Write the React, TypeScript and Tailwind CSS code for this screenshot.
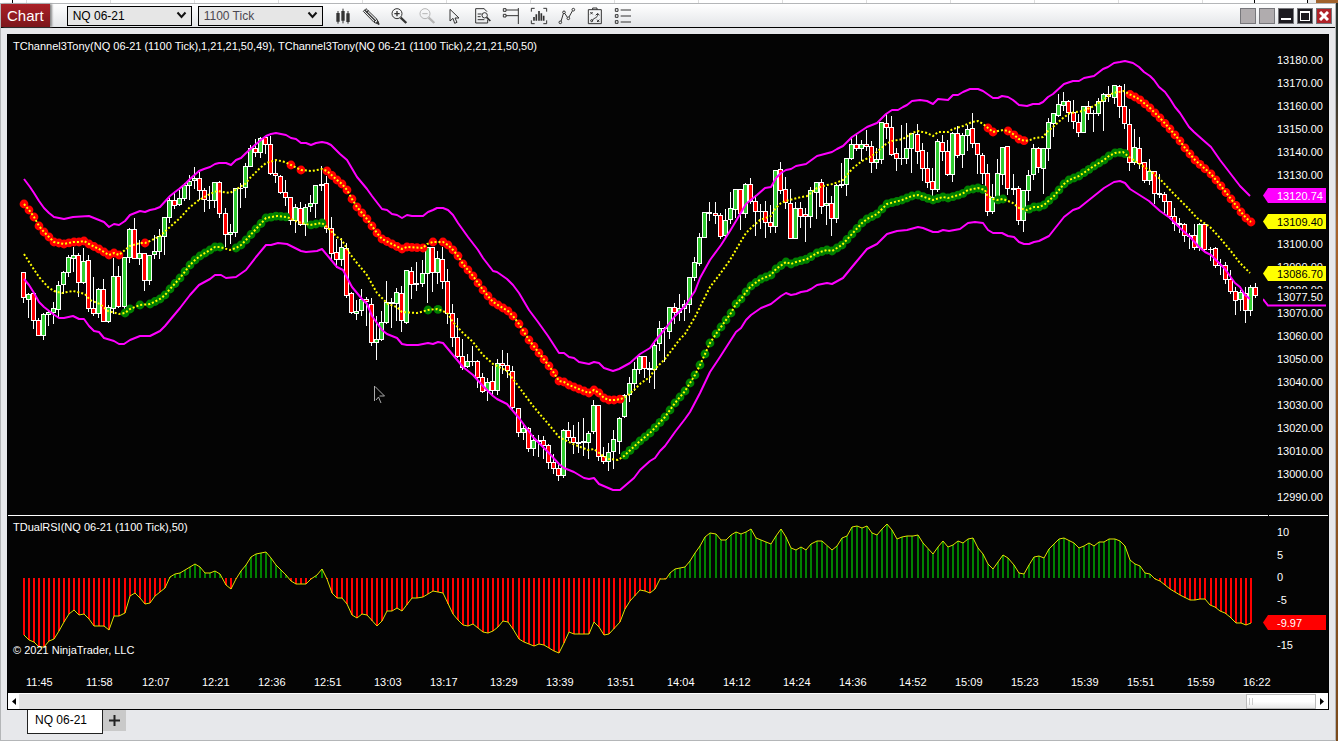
import React from "react";

/* ---------- chart data (plot units) ---------- */

// colour, high, body top, body bottom, low
const CANDLES = `r272,272,297,302 g293,294,299,317 r293,293,320,328 r318,320,335,335 g313,314,335,339 g310,312,314,325 g302,308,312,323 g281,285,309,316 g271,272,284,293 g255,257,272,276
g247,255,258,271 r253,255,282,296 g248,261,282,283 r255,260,308,311 r277,308,313,315 g288,289,313,317 r279,289,321,321 g305,307,321,322 g258,276,308,313 r266,276,306,307
g257,257,306,309 g228,229,257,262 r218,229,258,258 g240,253,258,264 r253,253,280,290 g255,255,280,284 g235,251,254,258 g229,236,251,258 g217,217,236,254 g198,200,217,222
r193,200,205,208 g190,198,204,205 g183,185,198,200 g175,181,185,199 g167,178,180,188 r172,178,190,199 r188,190,199,211 w186,200,200,208 g182,182,200,207 r181,182,213,217
r208,213,234,246 g224,232,234,243 g188,188,232,236 w183,188,188,207 g163,166,187,197 g145,148,166,166 r139,148,152,156 g137,138,152,157 r136,137,144,153 r136,144,173,174
r160,173,175,182 r175,176,192,193 r180,192,197,205 r197,197,220,224 g204,207,220,232 r202,208,224,225 g204,207,224,235 g195,203,206,211 g185,185,203,217 w166,184,185,190
r176,183,228,232 r217,228,253,260 r239,252,259,267 g238,247,259,265 r243,248,295,297 r292,293,312,313 g300,311,313,319 g289,299,310,315 r297,299,301,325 r298,304,342,345
g316,339,342,359 g311,322,339,340 g281,302,322,323 w298,302,303,327 g288,292,303,320 r286,293,320,331 g270,270,322,323 r267,271,284,298 w262,283,284,290 g260,273,283,286
g247,247,273,302 r247,247,272,291 g251,258,272,283 r247,259,281,288 r269,281,313,323 r304,313,337,346 r318,337,356,357 r339,356,367,369 g354,361,366,367 w346,361,361,365
r360,361,377,387 r373,377,391,392 g378,382,390,400 r366,381,390,394 g359,363,390,394 r350,363,365,373 r353,365,370,377 r366,371,407,408 r408,408,432,436 g425,428,432,439
r427,428,448,451 g435,440,448,455 w435,440,441,456 r436,440,445,458 r444,445,462,468 r454,462,468,473 r463,468,475,480 g429,430,475,477 r422,430,437,440 r425,437,442,453
g422,442,443,452 w418,441,442,455 g431,433,442,458 g400,405,431,433 r405,405,456,460 r447,456,461,463 g443,452,461,470 g430,439,451,468 g417,418,441,453 g394,395,416,417
g377,383,394,401 g362,369,383,390 g356,356,369,373 r356,356,368,377 w362,368,369,382 g343,345,369,388 g321,328,343,350 w327,328,328,361 g307,307,331,338 r303,307,312,323
g294,308,312,320 g300,304,308,320 g277,277,304,312 g257,262,277,280 g233,237,263,265 g212,212,237,237 w202,212,213,220 r202,213,215,223 r213,215,236,238 g209,220,235,238
g192,208,219,223 g189,189,209,217 r189,189,213,229 g183,184,213,217 r178,184,201,203 r195,201,211,235 w204,211,211,228 r201,211,222,237 r205,222,226,232 g170,170,226,232
r162,169,190,193 r177,189,202,208 r189,203,238,238 g202,208,238,238 r202,208,216,227 r208,214,216,241 g187,190,216,227 g182,182,192,218 r179,182,206,213 g187,203,205,224
r196,203,218,235 g184,185,218,222 w163,184,185,187 g158,158,184,195 g138,144,158,159 r135,144,148,150 g140,144,148,160 r130,144,146,150 r141,146,162,172 g148,159,162,168
g122,122,159,163 r114,123,127,138 r116,127,154,155 r148,153,158,170 w125,158,158,164 g123,148,158,163 g133,133,148,172 r124,134,151,163 r143,150,168,180 r152,168,182,187
r168,181,189,195 g139,141,189,191 r135,142,151,160 r140,151,174,175 g132,133,174,181 r126,133,155,157 g133,135,154,167 g125,129,135,150 r113,128,143,147 r143,143,154,173
r153,155,173,183 r164,173,211,215 g184,197,211,213 g159,173,197,203 g147,147,174,184 r146,146,188,194 w174,188,189,194 r186,188,220,224 g190,190,220,231 g170,175,190,200
g144,148,174,179 r147,148,167,172 g148,148,168,193 g118,122,148,160 g113,113,123,136 g94,104,115,116 g92,101,105,110 r100,101,112,121 r100,112,121,128 r114,122,132,136
g106,106,132,132 r101,106,113,119 w110,113,113,131 g98,101,113,115 g93,94,101,130 r86,94,96,101 g85,85,97,103 r85,86,106,117 r84,106,123,128 r109,124,162,170
g129,147,162,164 r137,148,163,168 r162,162,180,182 g159,171,180,184 r171,171,193,203 w174,193,194,197 r192,194,201,212 r201,201,216,218 r208,216,223,230 w218,223,224,232
r223,224,235,241 w233,235,236,248 r224,235,247,249 g223,224,247,250 r223,224,249,251 w247,249,249,260 r247,248,265,267 w259,265,265,274 r262,265,279,283 r270,279,291,293
r287,291,300,314 g290,292,299,310 r287,293,310,322 g285,287,310,315 r283,287,295,297`
  .trim()
  .split(/\s+/)
  .map((s) => {
    const [high, top, bottom, low] = s.slice(1).split(",").map(Number);
    return { kind: s[0], high, top, bottom, low };
  });

type Pt = [number, number];
const parse = (s: string): Pt[] =>
  s.trim().split(/\s+/).map((p) => p.split(",").map(Number) as Pt);

const UPPER = parse(`24,179 30,187 34,193 39,201 44,208 49,213 54,217 64,219 73,217 89,216 94,218 104,222 109,227 114,224 119,225 125,221 130,215 140,211 145,212 150,210 155,209 160,207 170,196 175,192 179,189 185,184 190,179 199,171 204,169 210,167 215,164 219,163 226,163 231,165 236,160 241,158 246,153 255,145 261,140 266,136 271,134 276,133 286,135 291,138 296,139 301,143 306,143 311,145 316,143 322,142 327,143 331,145 340,154 347,160 357,177 367,189 372,196 382,209 387,210 392,214 397,215 402,218 407,215 412,216 423,216 428,212 433,210 437,208 443,208 448,210 453,215 458,223 468,237 478,250 483,258 493,271 497,272 507,279 513,285 519,293 529,310 538,322 548,336 559,353 564,353 569,357 574,358 579,362 589,364 594,362 599,363 604,368 613,371 619,369 630,363 640,354 650,348 655,341 665,329 675,316 685,306 695,291 700,278 710,260 721,245 730,231 736,221 746,204 752,199 757,195 765,188 771,187 776,178 781,173 786,170 791,169 796,166 806,164 817,156 832,152 837,149 843,146 852,137 867,127 877,123 886,114 892,110 898,110 903,107 907,105 912,101 920,100 927,101 933,104 938,99 948,100 953,95 958,95 963,92 970,89 978,89 983,91 993,98 998,98 1002,96 1008,97 1013,100 1019,105 1027,106 1033,104 1039,104 1043,102 1048,97 1053,94 1064,84 1073,81 1079,81 1084,78 1094,76 1103,69 1108,67 1114,63 1120,62 1125,61 1133,63 1139,67 1144,72 1150,76 1154,80 1159,87 1165,92 1170,99 1175,107 1180,113 1189,127 1194,132 1203,140 1211,147 1220,160 1230,173 1240,186 1250,196`);

const LOWER = parse(`24,279 29,285 34,293 39,302 44,307 53,314 59,318 64,318 73,316 79,319 84,319 89,326 94,331 99,332 104,338 114,341 119,344 124,344 130,340 140,336 150,336 160,331 165,326 170,320 180,308 190,295 199,285 210,279 215,275 221,275 226,278 236,277 246,270 256,257 266,245 271,245 278,243 287,244 301,251 306,252 317,251 322,249 332,261 337,267 343,270 352,287 362,299 367,304 372,316 377,323 382,330 387,334 397,338 402,344 407,345 418,345 428,343 433,344 438,342 443,343 448,349 463,367 473,375 482,385 493,396 497,399 507,404 513,411 519,418 533,437 548,452 559,464 564,468 574,472 584,478 589,479 594,478 599,484 613,490 620,490 634,478 640,470 650,461 655,458 660,451 665,446 675,432 685,419 690,412 700,393 710,372 720,357 736,332 741,328 746,320 751,315 761,308 771,304 781,296 786,293 791,295 796,294 801,292 807,291 811,289 817,285 827,283 832,284 843,278 852,267 857,261 867,249 877,244 887,234 897,231 907,230 918,227 923,228 933,232 938,232 943,230 949,231 960,229 968,223 975,222 983,223 988,230 993,233 1002,233 1008,236 1014,237 1019,242 1024,244 1029,244 1034,242 1039,241 1049,236 1064,217 1073,210 1079,208 1084,204 1089,200 1104,188 1114,182 1120,181 1125,183 1130,189 1149,201 1160,211 1170,218 1180,228 1190,237 1199,247 1205,252 1211,255 1220,264 1225,269 1235,283 1240,287 1245,295 1250,299`);

const MID_HIGH = parse(`24,204 29,210 34,217 39,226 44,232 49,237 54,242 64,244 73,242 79,242 84,241 89,244 99,249 104,252 109,255 114,253 119,255 125,250 130,246 140,243 145,243 150,241 160,236 170,227 180,218 190,207 199,200 210,194 217,191 230,193 235,190 245,184 250,178 260,168 266,163 276,160 285,162 291,165 301,170 312,171 322,169 327,171 337,180 342,184 347,190 352,199 357,207 367,219 372,226 377,233 382,239 392,244 402,249 407,247 423,248 427,244 433,242 443,242 448,245 453,250 458,256 463,264 473,276 483,290 488,296 493,302 508,311 513,316 519,324 529,340 539,353 549,366 554,373 559,381 564,382 569,385 589,393 594,390 599,393 604,398 609,400 615,400 621,399 627,396 634,390 641,383 650,377 655,369 665,359 680,339 685,334 695,317 700,307 710,287 720,274 730,260 737,248 746,233 752,227 760,220 771,216 775,209 781,203 786,201 797,198 807,196 817,188 827,185 833,184 843,180 852,169 862,161 872,156 878,151 886,144 892,141 903,139 912,133 918,131 927,133 933,136 938,132 948,132 953,129 963,126 972,122 978,121 983,124 988,128 993,132 1003,130 1008,131 1013,134 1019,139 1025,141 1030,140 1035,138 1043,137 1048,131 1053,127 1063,118 1070,113 1083,111 1094,106 1103,100 1113,93 1124,91 1129,94 1139,99 1150,108 1160,118 1170,129 1180,141 1185,148 1195,160 1211,174 1221,186 1231,199 1241,212 1246,218 1251,222`);

const MID_LOW = parse(`24,254 33,268 39,277 48,287 54,291 62,293 73,291 85,294 90,300 100,304 108,311 119,314 125,313 130,309 140,305 150,304 160,299 165,295 170,289 180,278 190,265 195,260 200,256 210,250 215,247 220,247 230,250 236,248 241,245 246,240 256,229 266,218 277,216 287,217 298,222 310,225 322,223 327,227 337,237 342,240 350,254 357,263 367,275 377,293 382,298 388,304 397,307 402,312 417,313 428,310 437,309 443,311 448,314 453,322 463,333 473,342 483,355 493,364 507,371 519,387 533,406 550,426 559,437 573,444 588,450 594,449 603,456 609,459 618,460 624,456 640,441 650,433 665,417 675,403 685,391 695,375 700,365 705,354 710,343 716,334 731,313 736,304 741,299 746,292 751,286 761,279 771,275 776,269 786,262 791,264 796,262 807,259 817,253 827,250 832,251 842,245 852,234 862,223 867,219 877,214 887,204 902,200 912,196 918,195 933,200 943,197 948,198 962,194 968,190 978,188 985,190 987,195 993,199 997,200 1003,199 1013,203 1019,208 1027,210 1034,207 1039,207 1044,205 1054,196 1064,184 1069,180 1079,176 1094,166 1104,160 1109,156 1115,153 1123,152 1129,157 1138,163 1149,170 1159,178 1173,193 1187,207 1197,218 1210,227 1220,238 1230,250 1240,263 1250,273`);

const RSI = parse(`24,635 29,640 34,642 39,647 44,647 49,641 54,639 59,631 64,622 69,614 74,610 79,615 84,614 89,619 94,626 104,626 109,630 114,616 119,616 125,613 130,596 135,593 140,598 145,604 150,603 155,596 160,592 165,588 170,577 175,574 180,573 185,570 190,567 195,564 200,567 205,573 210,573 215,571 220,574 226,585 231,589 236,579 241,571 246,565 251,557 256,554 266,552 271,558 276,565 286,575 291,581 296,584 306,584 311,579 317,575 322,569 327,579 332,593 337,598 342,598 347,604 352,615 357,618 362,614 367,615 377,626 382,621 387,611 392,611 397,608 402,611 412,598 417,598 423,597 433,591 443,593 453,614 458,620 463,625 468,626 473,624 483,632 488,633 493,631 498,627 503,621 508,622 513,629 519,639 524,642 534,646 539,644 544,645 549,648 554,651 559,653 564,643 569,632 574,634 589,634 594,622 599,627 604,635 609,634 620,622 625,609 630,601 640,590 645,591 650,593 655,589 660,579 666,579 670,573 675,569 685,567 690,561 695,553 700,546 705,537 710,533 716,534 721,540 726,540 731,535 736,532 741,534 746,532 751,529 756,538 771,544 776,536 781,529 786,537 791,548 796,550 801,547 806,550 811,544 817,541 822,541 832,550 837,546 842,538 847,536 852,527 857,526 862,528 867,526 872,533 877,535 882,529 887,524 892,530 897,539 902,537 907,536 913,536 918,535 923,543 933,554 938,547 943,541 948,547 953,545 958,541 963,543 968,539 973,538 978,548 983,554 988,564 993,569 1003,555 1008,558 1014,565 1019,573 1024,574 1029,565 1034,557 1039,556 1044,558 1049,549 1054,544 1059,539 1064,538 1074,543 1079,548 1084,546 1089,543 1094,546 1099,542 1104,542 1109,539 1115,539 1120,541 1125,546 1130,560 1135,564 1140,566 1145,573 1150,574 1155,579 1160,581 1170,589 1180,595 1190,600 1195,600 1200,599 1205,599 1210,605 1215,607 1220,611 1225,613 1230,617 1236,623 1241,623 1246,625 1251,623`);

// bar ranges that carry a trend marker
const RED_RANGES: Pt[] = [[0, 19], [24, 24], [53, 53], [55, 55], [60, 79], [81, 81], [83, 118], [191, 192], [195, 198], [219, 243]];
const GREEN_RANGES: Pt[] = [[20, 21], [23, 23], [25, 39], [42, 52], [57, 59], [80, 80], [82, 82], [119, 190], [193, 194], [199, 218]];

const barX = (i: number) => 23 + 5 * i + Math.floor(i * 0.0511);
const toPoints = (p: Pt[]) => p.map((q) => q.join(",")).join(" ");
const yAt = (pts: Pt[], x: number) => {
  for (let i = 1; i < pts.length; i++) {
    if (x <= pts[i][0]) {
      const [x0, y0] = pts[i - 1];
      const [x1, y1] = pts[i];
      return y0 + ((y1 - y0) * (x - x0)) / (x1 - x0);
    }
  }
  return pts[pts.length - 1][1];
};
const expand = (ranges: Pt[]) =>
  ranges.flatMap(([a, b]) => Array.from({ length: b - a + 1 }, (_, k) => a + k));

const TIMES: [string, number][] = [
  ["11:45", 60], ["11:58", 56], ["12:07", 60], ["12:21", 56], ["12:36", 56], ["12:51", 60],
  ["13:03", 56], ["13:17", 60], ["13:29", 56], ["13:39", 61], ["13:51", 60], ["14:04", 56],
  ["14:12", 60], ["14:24", 56], ["14:36", 60], ["14:52", 56], ["15:09", 56], ["15:23", 60],
  ["15:39", 56], ["15:51", 60], ["15:59", 56],
];
const PRICES = Array.from({ length: 20 }, (_, i) => (13180 - 10 * i).toFixed(2));

/* ---------- drawings ---------- */

function PriceDrawing() {
  return (
    <svg className="block h-full w-full" viewBox="8 35 1260 480" preserveAspectRatio="none" aria-label="Price chart">
      <g shapeRendering="crispEdges">
        {CANDLES.map((c, i) => {
          const x = barX(i);
          return (
            <g key={i}>
              <rect x={x} y={c.high} width={1} height={c.low - c.high + 1} fill="#fff" />
              <rect x={x - 2} y={c.top} width={5} height={c.bottom - c.top + 1} fill="#fff" />
              {c.kind !== "w" && c.bottom - c.top > 1 && (
                <rect x={x - 1} y={c.top + 1} width={3} height={c.bottom - c.top - 1} fill={c.kind === "r" ? "#ff0000" : "#32cd32"} />
              )}
            </g>
          );
        })}
      </g>
      {expand(RED_RANGES).map((i) => (
        <circle key={i} cx={barX(i) + 1} cy={yAt(MID_HIGH, barX(i) + 1)} r={4.4} fill="#ff0000" />
      ))}
      {expand(GREEN_RANGES).map((i) => (
        <circle key={i} cx={barX(i) + 1} cy={yAt(MID_LOW, barX(i) + 1)} r={4.4} fill="#008000" />
      ))}
      <g fill="none" stroke="#ff0" strokeWidth={2} strokeDasharray="2 2">
        <polyline points={toPoints(MID_HIGH)} />
        <polyline points={toPoints(MID_LOW)} />
      </g>
      <g fill="none" stroke="#f0f" strokeWidth={2} strokeLinejoin="round">
        <polyline points={toPoints(UPPER)} />
        <polyline points={toPoints(LOWER)} />
      </g>
      <path d="M374.500 386v15M375 386.500l9.500 9.500h-5M376 400l2.500-3 2.500 6" fill="none" stroke="#aaa" />
    </svg>
  );
}

function RsiDrawing() {
  return (
    <svg className="block h-full w-full" viewBox="8 516 1260 177" preserveAspectRatio="none" aria-label="RSI chart">
      <g shapeRendering="crispEdges">
        {CANDLES.slice(0, 244).map((_, i) => {
          const x = barX(i);
          const y = Math.round(yAt(RSI, x + 1));
          return (
            <rect key={i} x={x} y={Math.min(y, 578)} width={2} height={Math.abs(y - 578)} fill={y > 578 ? "#ff0000" : "#008000"} />
          );
        })}
      </g>
      <polyline points={toPoints(RSI)} fill="none" stroke="#e0e000" strokeWidth={1} />
    </svg>
  );
}

const ICONS: { name: string; art: React.ReactNode; dim?: boolean }[] = [
  {
    name: "Bar style",
    art: (
      <>
        <path d="M12 12v38M27 5v44M42 12v38" />
        <path d="M7 18h10v26H7zM22 12h10v29H22zM37 19h10v26H37z" fill="currentColor" stroke="none" />
      </>
    ),
  },
  {
    name: "Drawing tools",
    art: (
      <>
        <path d="M4 13 12 5 45 37 51 52 36 46Z" />
        <path d="M8 9 40 41" strokeWidth={4} />
        <path d="m13 17 7-7M36 45l8-8" />
        <path d="m43 46 8 6-3-9z" fill="currentColor" />
      </>
    ),
  },
  {
    name: "Zoom in",
    art: (
      <>
        <circle cx="21" cy="20" r="15" />
        <path d="M21 12v16M13 20h16" strokeWidth={4} />
        <path d="M32 32 49 48" strokeWidth={7} />
      </>
    ),
  },
  {
    name: "Zoom out",
    dim: true,
    art: (
      <>
        <circle cx="21" cy="20" r="15" />
        <path d="M13 20h16" />
        <path d="M32 32 49 48" strokeWidth={7} />
      </>
    ),
  },
  { name: "Cursor", art: <path d="M12 7v35l9-8 5 15 7-3-6-13h12z" /> },
  {
    name: "Data box",
    art: (
      <>
        <path d="M31 5H5v43h36V38M30 5l9 9" />
        <path d="M11 21h12M11 29h9M11 38h20" />
        <circle cx="32" cy="25" r="8" />
        <path d="m38 31 11 11" strokeWidth={5} />
      </>
    ),
  },
  {
    name: "Chart trader",
    art: <path d="M4 5h8v8H4zM4 22h8v8H4zM12 9h37M12 26h37M49 3v48" />,
  },
  {
    name: "Data series",
    art: (
      <>
        <path d="M4 14V4h10M40 4h10v10M50 40v10H40M14 50H4V40" />
        <path d="M12 41V30M19 41V22M27 41V12M34 41V19M41 41V26" strokeWidth={5} />
      </>
    ),
  },
  {
    name: "Indicators",
    art: (
      <>
        <path d="M9 43 16 20M21 20l7 11M33 30 43 12" />
        <circle cx="7" cy="46" r="4" />
        <circle cx="18" cy="16" r="4" />
        <circle cx="31" cy="34" r="4" />
        <circle cx="46" cy="8" r="4" />
      </>
    ),
  },
  {
    name: "Strategies",
    art: (
      <>
        <path d="M7 8h39v42H7zM20 8V3h13v5" />
        <path d="m13 15 7 7M20 15l-7 7M33 38l7 7M40 38l-7 7M19 43c0-12 17-7 16-22M29 25l6-6 5 6" />
        <circle cx="17" cy="41" r="3" />
      </>
    ),
  },
  {
    name: "Properties",
    art: <path d="M4 5h8v8H4zM4 23h8v8H4zM4 41h8v8H4zM20 9h31M20 27h31M20 45h31" />,
  },
];

function ToolIcon({ children }: { children: React.ReactNode }) {
  return (
    <svg className="size-[18px]" viewBox="0 0 54 54" fill="none" stroke="currentColor" strokeWidth={3}>
      {children}
    </svg>
  );
}

/* ---------- controls ---------- */

function Picker({ label, value, tone }: { label: string; value: string; tone: string }) {
  return (
    <div className="relative h-5 w-[125px]">
      <select aria-label={label} className={`block h-5 w-full appearance-none border border-black bg-[#e6e6e6] pl-[5px] text-[12px] leading-[18px] ${tone}`} defaultValue={value}>
        <option>{value}</option>
      </select>
      <svg className="pointer-events-none absolute top-[5px] right-[5px] h-2 w-[11px]" viewBox="0 0 11 8" fill="none" stroke="#111" strokeWidth={2}>
        <path d="M1.500 1.500 5.500 6 9.500 1.500" />
      </svg>
    </div>
  );
}

function Tag({ value, tone }: { value: string; tone: string }) {
  return (
    <div className={`absolute -left-[5px] h-[15px] w-[63px] pl-[14px] leading-[16px] [clip-path:polygon(0_50%,5px_0,100%_0,100%_100%,5px_100%)] ${tone}`}>
      {value}
    </div>
  );
}

const WIN = "flex size-4 justify-center border border-[#77777b]";

export default function App() {
  return (
    <div className="flex min-h-screen flex-col bg-[#e5e6e9] font-['Liberation_Sans',Arial,sans-serif]">
      <div className="flex h-[3px] justify-between bg-white">
        <div className="flex">
          <div className="w-[13px] border-r border-black" />
          <div className="w-[14px] border-r border-[#ddd]" />
          {Array.from({ length: 14 }, (_, i) => (
            <div key={i} className="w-[84px] border-r border-[#ddd]" />
          ))}
        </div>
        <div className="flex">
          <div className="w-[54px] border-x border-black" />
          <div className="w-2 bg-[#eee]" />
          <div className="w-[22px] bg-[#a0622c]" />
        </div>
      </div>

      <div className="flex flex-1">
        <div className="flex min-w-0 flex-1 flex-col border border-[#b4b6b8] bg-[#e7e8eb]">
          <header className="flex h-6 items-center border-b border-black bg-linear-to-b from-white to-[#e3e5e8]">
            <h1 className="h-[23px] bg-linear-to-b from-[#ab2127] to-[#7c161b] px-[6px] text-[15px] leading-6 text-white shadow-[2px_0_2px_#888]">Chart</h1>
            <div className="ml-[17px] flex gap-[6px]">
              <Picker label="Instrument" value="NQ 06-21" tone="text-black" />
              <Picker label="Interval" value="1100 Tick" tone="text-[#4b4650]" />
            </div>
            <div className="ml-[11px] flex gap-[10px]">
              {ICONS.map((icon) => (
                <button key={icon.name} type="button" aria-label={icon.name} className={icon.dim ? "text-[#b5b5b5]" : "text-[#333]"}>
                  <ToolIcon>{icon.art}</ToolIcon>
                </button>
              ))}
            </div>
            <div className="mr-[3px] ml-auto flex gap-[3px]">
              <button type="button" aria-label="Link instrument" className={`${WIN} bg-[#b0acae]`} />
              <button type="button" aria-label="Link interval" className={`${WIN} bg-[#b0acae]`} />
              <button type="button" aria-label="Minimize" className={`${WIN} items-end bg-[#1d1b20] pb-[3px]`}>
                <span className="h-[2px] w-[10px] bg-white" />
              </button>
              <button type="button" aria-label="Maximize" className={`${WIN} items-center bg-[#1d1b20]`}>
                <span className="size-[10px] border border-t-2 border-white" />
              </button>
              <button type="button" aria-label="Close" className={`${WIN} items-center bg-[#b02228]`}>
                <svg className="size-[10px]" viewBox="0 0 10 10" stroke="#fff" strokeWidth={3}>
                  <path d="m1 1 8 8M9 1 1 9" />
                </svg>
              </button>
            </div>
          </header>

          <main className="mx-[6px] mt-[6px] border border-black bg-[#040404] text-[11px] leading-4 text-white">
            <section className="flex h-[480px]">
              <div className="relative min-w-0 flex-1">
                <PriceDrawing />
                <p className="absolute top-[3px] left-[5px] whitespace-nowrap">
                  TChannel3Tony(NQ 06-21 (1100 Tick),1,21,21,50,49), TChannel3Tony(NQ 06-21 (1100 Tick),2,21,21,50,50)
                </p>
              </div>
              <div className="relative w-[60px] pt-[13px] pl-[9px]">
                {PRICES.map((p) => (
                  <div key={p} className="h-[23px] leading-[24px]">{p}</div>
                ))}
                <div className="absolute top-[254px] left-0 h-[15px] w-[58px] bg-[#040404] pl-[9px]">13077.50</div>
                <svg className="absolute top-[263px] -left-[5px] h-[9px] w-[63px]" viewBox="0 0 63 9" fill="none" stroke="#f0f" strokeWidth={2}>
                  <path d="m0 1 5 6.500h58" />
                </svg>
                <div className="absolute top-[153px] left-0"><Tag value="13120.74" tone="bg-[#ff00ff] text-white" /></div>
                <div className="absolute top-[179px] left-0"><Tag value="13109.40" tone="bg-[#ffff00] text-black" /></div>
                <div className="absolute top-[231px] left-0"><Tag value="13086.70" tone="bg-[#ffff00] text-black" /></div>
              </div>
            </section>
            <div className="flex h-px gap-px">
              <div className="flex-1 bg-white" />
              <div className="w-[59px] bg-white" />
            </div>
            <section className="flex h-[177px]">
              <div className="relative min-w-0 flex-1">
                <RsiDrawing />
                <p className="absolute top-[3px] left-[5px]">TDualRSI(NQ 06-21 (1100 Tick),50)</p>
                <p className="absolute bottom-[35px] left-[5px]">© 2021 NinjaTrader, LLC</p>
                <div className="absolute inset-x-0 bottom-[3px] flex pl-[18px]">
                  {TIMES.map(([t, gap]) => (
                    <span key={t} className="w-0" style={{ flexGrow: gap }}>{t}</span>
                  ))}
                  <span className="w-[25px]">16:22</span>
                </div>
              </div>
              <div className="relative w-[60px] pl-[9px]">
                <div className="flex h-[137px] flex-col justify-between pt-[8px]">
                  {["10", "5", "0", "-5", "", "-15"].map((v, i) => (
                    <div key={i} className="h-4">{v}</div>
                  ))}
                </div>
                <div className="absolute top-[99px] left-0"><Tag value="-9.97" tone="bg-[#ff0000] text-white" /></div>
              </div>
            </section>
            <div className="flex h-4 border-t border-white bg-[#e3e3e3]">
              <button type="button" aria-label="Scroll left" className="flex w-[11px] items-center justify-center bg-white">
                <svg className="h-[7px] w-1" viewBox="0 0 4 7"><path d="M4 0v7L0 3.500z" /></svg>
              </button>
              <div className="ml-auto flex w-[70px] gap-px border border-[#bbb] bg-linear-to-b from-white from-50% to-[#e8e8e8] py-[3px] pl-[2px]">
                <span className="w-px bg-[#ccc]" />
                <span className="ml-px w-px bg-[#ccc]" />
              </div>
              <button type="button" aria-label="Scroll right" className="flex w-3 items-center justify-center bg-white">
                <svg className="h-[7px] w-1" viewBox="0 0 4 7"><path d="M0 0v7l4-3.500z" /></svg>
              </button>
            </div>
          </main>

          <nav className="flex items-start pl-[26px] text-[12px]">
            <button type="button" className="h-6 w-[76px] border border-t-0 border-[#222] bg-white pr-[8px] pb-[3px] text-black">NQ 06-21</button>
            <button type="button" aria-label="Add tab" className="flex h-[21px] w-[23px] items-center justify-center bg-[#c9c9c9]">
              <svg className="size-[11px]" viewBox="0 0 11 11" stroke="#222" strokeWidth={2}>
                <path d="M5.500 0v11M0 5.500h11" />
              </svg>
            </button>
          </nav>
        </div>
        <div className="w-[2px] bg-linear-to-b from-[#26302c] from-10% via-[#a8642c] via-30% to-[#7a4a1c]" />
      </div>
    </div>
  );
}
